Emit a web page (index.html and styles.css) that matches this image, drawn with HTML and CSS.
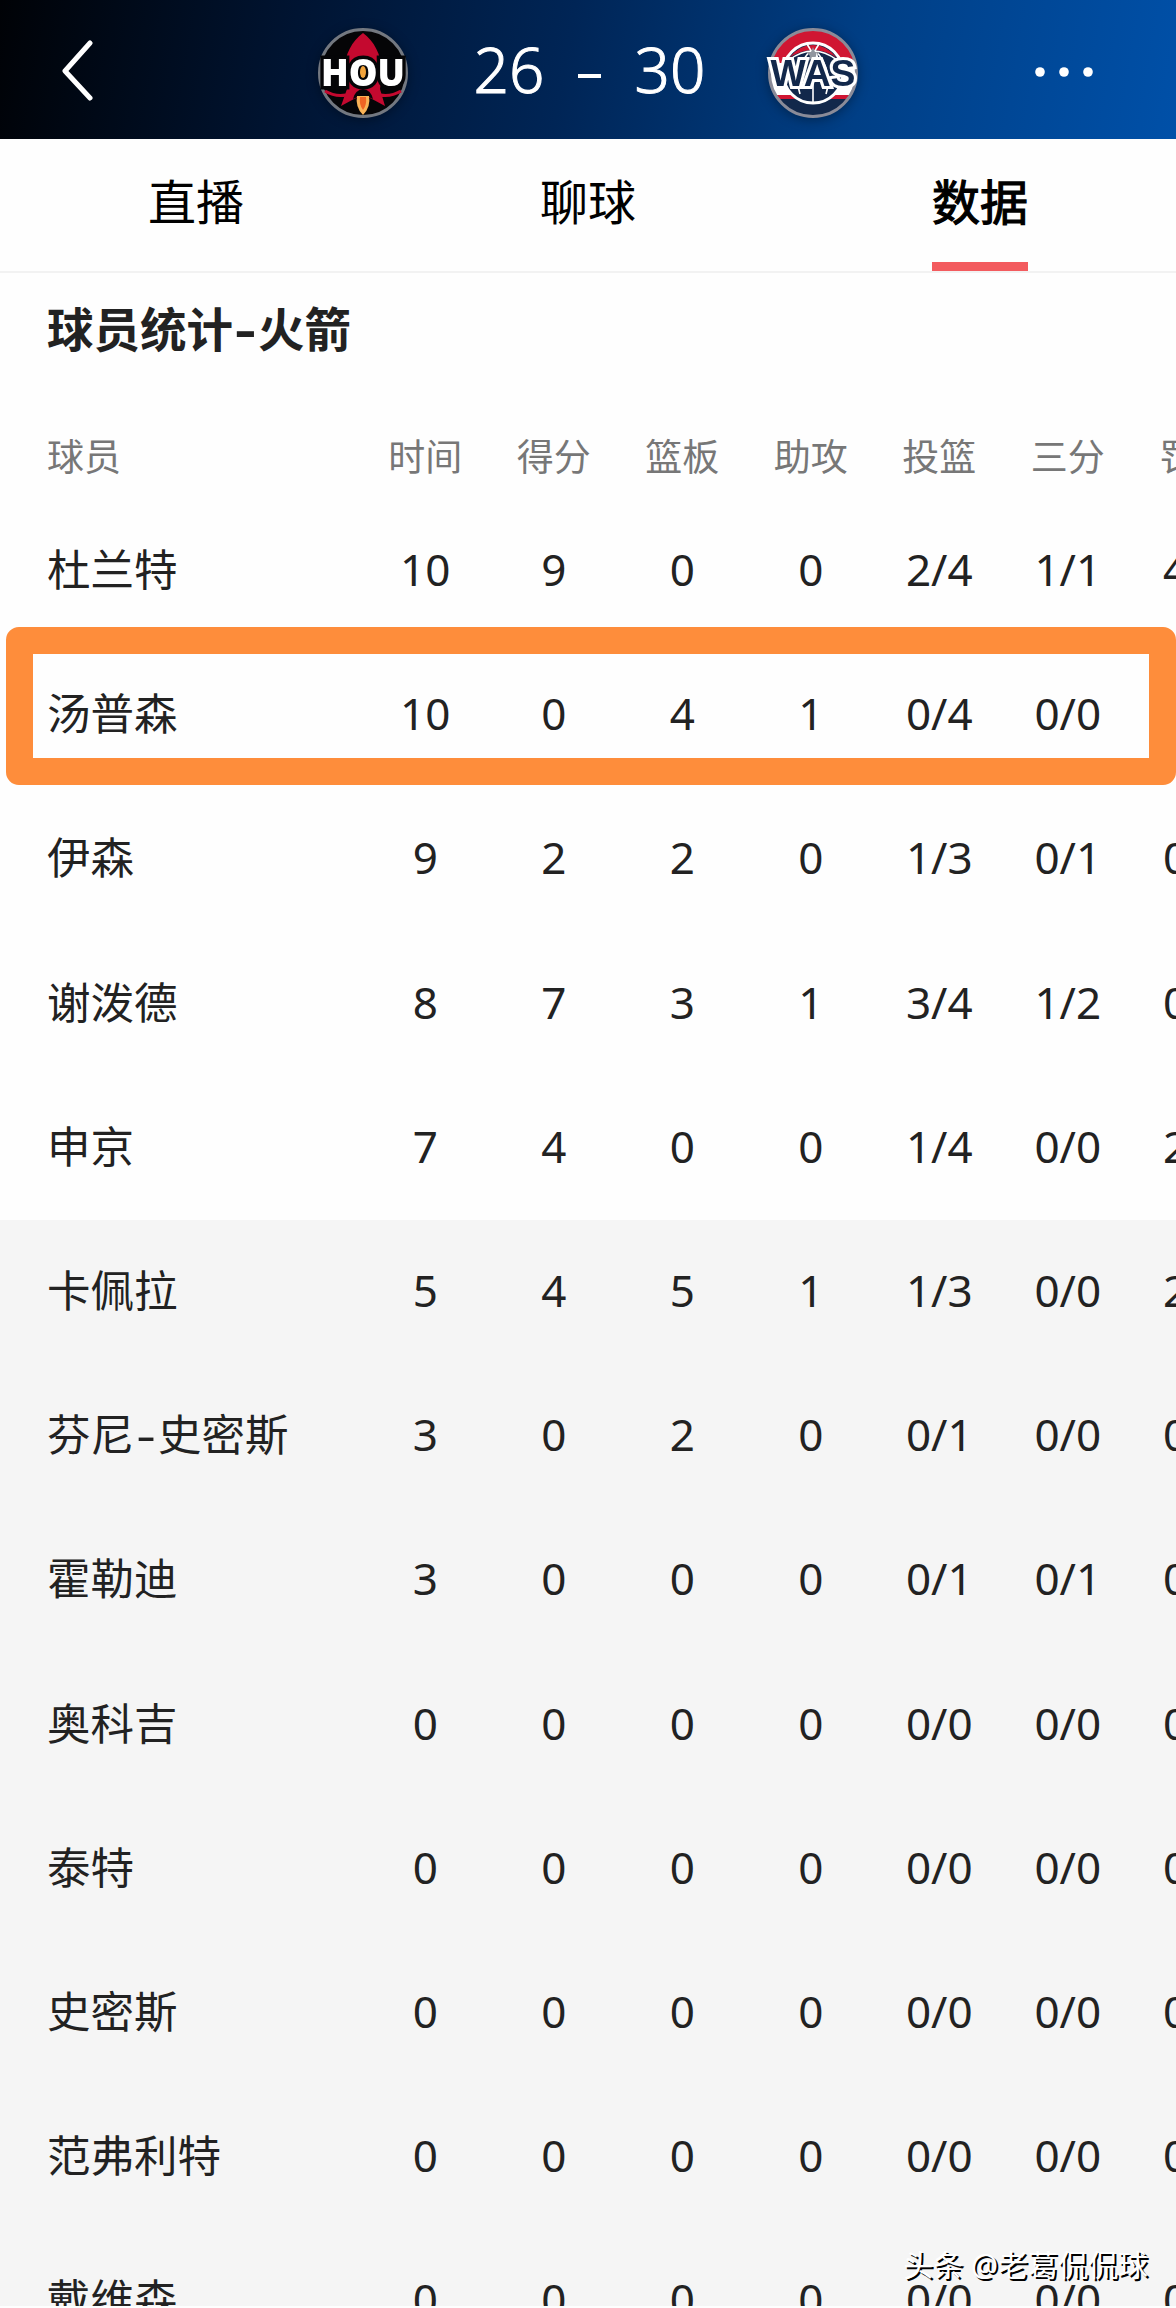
FILE: index.html
```html
<!DOCTYPE html>
<html lang="zh-CN">
<head>
    <meta charset="UTF-8">
    <meta name="viewport" content="width=device-width, initial-scale=1.0">
    <title>球员统计-火箭</title>
    <link rel="stylesheet" href="styles.css">
</head>
<body>
    <header class="top-bar">
        <svg class="back" viewBox="0 0 32 64" fill="none" stroke="#fff" stroke-width="5" stroke-linecap="round" stroke-linejoin="round">
            <path d="M29 4L4 32L29 59"/>
        </svg>
        <div class="match">
            <svg class="logo" viewBox="0 0 92 92">
                <circle cx="46" cy="46" r="43.5" fill="#050507" stroke="#737880" stroke-width="3"/>
                <path d="M46 6C35 14 28 27 27 44L30 62L24 79L37 72L46 68L55 72L68 79L63 62L65 44C64 27 57 14 46 6Z" fill="#c4092f"/>
                <path d="M8 64Q18 70 29 68M84 64Q74 70 63 68" fill="none" stroke="#c4092f" stroke-width="3"/>
                <path d="M36 72Q38 63 46 62Q54 63 56 72Q46 66 36 72Z" fill="#050507"/>
                <path d="M40 69H52Q54 80 46 88Q38 80 40 69Z" fill="#f9b357"/>
                <path d="M43 70H49Q50 78 46 83Q42 78 43 70Z" fill="#ee6424"/>
                <text class="hou" x="46" y="58.5" text-anchor="middle" textLength="84" lengthAdjust="spacingAndGlyphs">HOU</text>
                <ellipse cx="46" cy="45" rx="3" ry="6" fill="#f2a43c"/>
            </svg>
            <span class="score home">26</span>
            <span class="dash"></span>
            <span class="score away">30</span>
            <svg class="logo" viewBox="0 0 92 92">
                <clipPath id="disc"><circle cx="46" cy="46" r="43"/></clipPath>
                <g clip-path="url(#disc)">
                    <rect width="92" height="92" fill="#fff"/>
                    <rect width="92" height="36" fill="#d01632"/>
                    <rect y="68" width="92" height="4" fill="#d01632"/>
                    <rect y="72" width="92" height="20" fill="#12284b"/>
                </g>
                <circle cx="46" cy="46" r="30" fill="#12284b" stroke="#fff" stroke-width="3"/>
                <path d="M22 31Q32 18 46 18Q60 18 70 31Q58 23 46 23Q34 23 22 31Z" fill="#d01632"/>
                <path d="M46 24V76M22 33Q46 15 70 33M33 67Q26 45 42 25M59 67Q66 45 50 25M40 17L46 27L52 17" fill="none" stroke="#fff" stroke-width="1.6"/>
                <path d="M46 20L48 25L53 25L49 29L51 34L46 31L41 34L43 29L39 25L44 25Z" fill="#91969f"/>
                <circle cx="46" cy="46" r="43.5" fill="none" stroke="#8a8b98" stroke-width="3"/>
                <text class="was" x="46" y="59" text-anchor="middle" textLength="85" lengthAdjust="spacingAndGlyphs">WAS</text>
            </svg>
        </div>
        <svg class="more" viewBox="0 0 60 12" fill="#fff">
            <circle cx="6" cy="6" r="4.8"/>
            <circle cx="30" cy="6" r="4.8"/>
            <circle cx="54" cy="6" r="4.8"/>
        </svg>
    </header>

    <nav class="tabs">
        <a class="tab">直播</a>
        <a class="tab">聊球</a>
        <a class="tab active">数据</a>
    </nav>

    <h1>球员统计<span class="hyphen">-</span>火箭</h1>

    <div class="table-wrap">
        <table id="stats-table">
            <thead>
                <tr>
                    <th class="name">球员</th>
                    <th>时间</th>
                    <th>得分</th>
                    <th>篮板</th>
                    <th>助攻</th>
                    <th>投篮</th>
                    <th>三分</th>
                    <th>罚球</th>
                </tr>
            </thead>
            <tbody>
                <!-- rows are added by the script -->
            </tbody>
        </table>
    </div>

    <div class="watermark">头条 @老葛侃侃球</div>

    <script>
        const tbody = document.querySelector('#stats-table tbody');

        // name, minutes, points, rebounds, assists, FG, 3PT, FT
        const players = [
            ['杜兰特', 10, 9, 0, 0, '2/4', '1/1', '4/4'],
            ['汤普森', 10, 0, 4, 1, '0/4', '0/0', ''],
            ['伊森', 9, 2, 2, 0, '1/3', '0/1', '0/0'],
            ['谢泼德', 8, 7, 3, 1, '3/4', '1/2', '0/0'],
            ['申京', 7, 4, 0, 0, '1/4', '0/0', '2/2'],
            ['卡佩拉', 5, 4, 5, 1, '1/3', '0/0', '2/2'],
            ['芬尼<span class="hyphen">-</span>史密斯', 3, 0, 2, 0, '0/1', '0/0', '0/0'],
            ['霍勒迪', 3, 0, 0, 0, '0/1', '0/1', '0/0'],
            ['奥科吉', 0, 0, 0, 0, '0/0', '0/0', '0/0'],
            ['泰特', 0, 0, 0, 0, '0/0', '0/0', '0/0'],
            ['史密斯', 0, 0, 0, 0, '0/0', '0/0', '0/0'],
            ['范弗利特', 0, 0, 0, 0, '0/0', '0/0', '0/0'],
            ['戴维森', 0, 0, 0, 0, '0/0', '0/0', '0/0']
        ];
        const starters = 5;
        const marked = 1;

        players.forEach((player, index) => {
            const row = document.createElement('tr');
            if (index >= starters) row.classList.add('bench');
            if (index === marked) row.classList.add('marked');
            row.innerHTML = player.map((value, i) =>
                `<td${i === 0 ? ' class="name"' : ''}>${value}</td>`
            ).join('');
            tbody.appendChild(row);
        });
    </script>
</body>
</html>
```

FILE: styles.css
```css
*, *::after {
    box-sizing: border-box;
}
body {
    position: relative;
    margin: 0;
    height: 2308px;
    overflow: hidden;
    background-color: #fefefe;
    color: #222;
    font-family: "Noto Sans", "Noto Sans CJK SC", sans-serif;
}
.top-bar {
    display: flex;
    justify-content: space-between;
    align-items: center;
    height: 139px;
    padding: 0 82px 0 61px;
    background: linear-gradient(100deg, #000206 0%, #001432 25%, #002556 48%, #003f86 73%, #0050a8 100%);
}
.back {
    width: 32px;
    height: 64px;
    margin-top: 2px;
}
.match {
    display: flex;
    align-items: center;
    margin-left: 49px;
}
.logo {
    width: 92px;
    height: 92px;
    margin-top: 6px;
    overflow: visible;
    filter: drop-shadow(0 2px 6px rgba(0, 0, 0, 0.35));
}
.hou {
    font: 900 37px "Noto Sans", sans-serif;
    fill: #fff;
    stroke: #050507;
    stroke-width: 7px;
    paint-order: stroke;
}
.was {
    font: bold 37px "Liberation Sans", sans-serif;
    fill: #12284b;
    stroke: #fff;
    stroke-width: 6px;
    paint-order: stroke;
}
.score {
    width: 166px;
    text-align: center;
    color: #fff;
    font-size: 62px;
    font-weight: 300;
    line-height: 90px;
    margin-top: -2px;
    -webkit-text-stroke: 1px #fff;
}
.home {
    margin-left: 17px;
}
.away {
    margin-right: 14px;
}
.dash {
    width: 23px;
    height: 4px;
    margin: 13px -14px 0;
    background-color: #fff;
}
.more {
    width: 60px;
    height: 12px;
    margin-top: 5px;
}
.tabs {
    display: flex;
    height: 134px;
    border-bottom: 2px solid #f2f2f2;
}
.tab {
    display: flex;
    flex: 1;
    flex-direction: column;
    align-items: center;
    padding-top: 28px;
    color: #000;
    font-size: 48px;
    line-height: 70px;
}
.active {
    -webkit-text-stroke: 1.2px #000;
}
.active::after {
    content: "";
    width: 96px;
    height: 9px;
    margin-top: auto;
    background-color: #f35b5e;
}
h1 {
    margin: 0;
    padding: 22px 47px 0;
    height: 137px;
    font-size: 46.5px;
    line-height: 68px;
}
.hyphen {
    display: inline-block;
    margin: 0 5px;
    transform: scaleX(1.4);
}
.table-wrap {
    height: 1896px;
    overflow: hidden;
    border-bottom: 0;
}
#stats-table {
    width: 1260px;
    table-layout: fixed;
    border-collapse: collapse;
}
th, td {
    width: 128.5px;
    padding: 0;
    text-align: center;
}
th {
    height: 89px;
    color: #777;
    font-size: 37px;
    font-weight: normal;
}
td {
    height: 144.2px;
    padding-bottom: 4px;
    font-size: 44px;
}
th.name, td.name {
    width: 361px;
    padding-left: 47px;
    text-align: left;
}
td.name {
    padding-bottom: 7px;
    font-size: 43.5px;
}
.bench {
    background-color: #f5f5f5;
}
.marked {
    position: relative;
}
/* frame over the highlighted player */
.marked::after {
    content: "";
    position: absolute;
    left: 6px;
    top: -16px;
    width: 1170px;
    height: 158px;
    border: 27px solid #fe8d3b;
    border-radius: 13px;
}
.watermark {
    position: absolute;
    right: 28px;
    bottom: 21px;
    color: #fff;
    font-size: 30px;
    line-height: 44px;
    white-space: nowrap;
    text-shadow: 2px 2px 0 #000;
}
```
